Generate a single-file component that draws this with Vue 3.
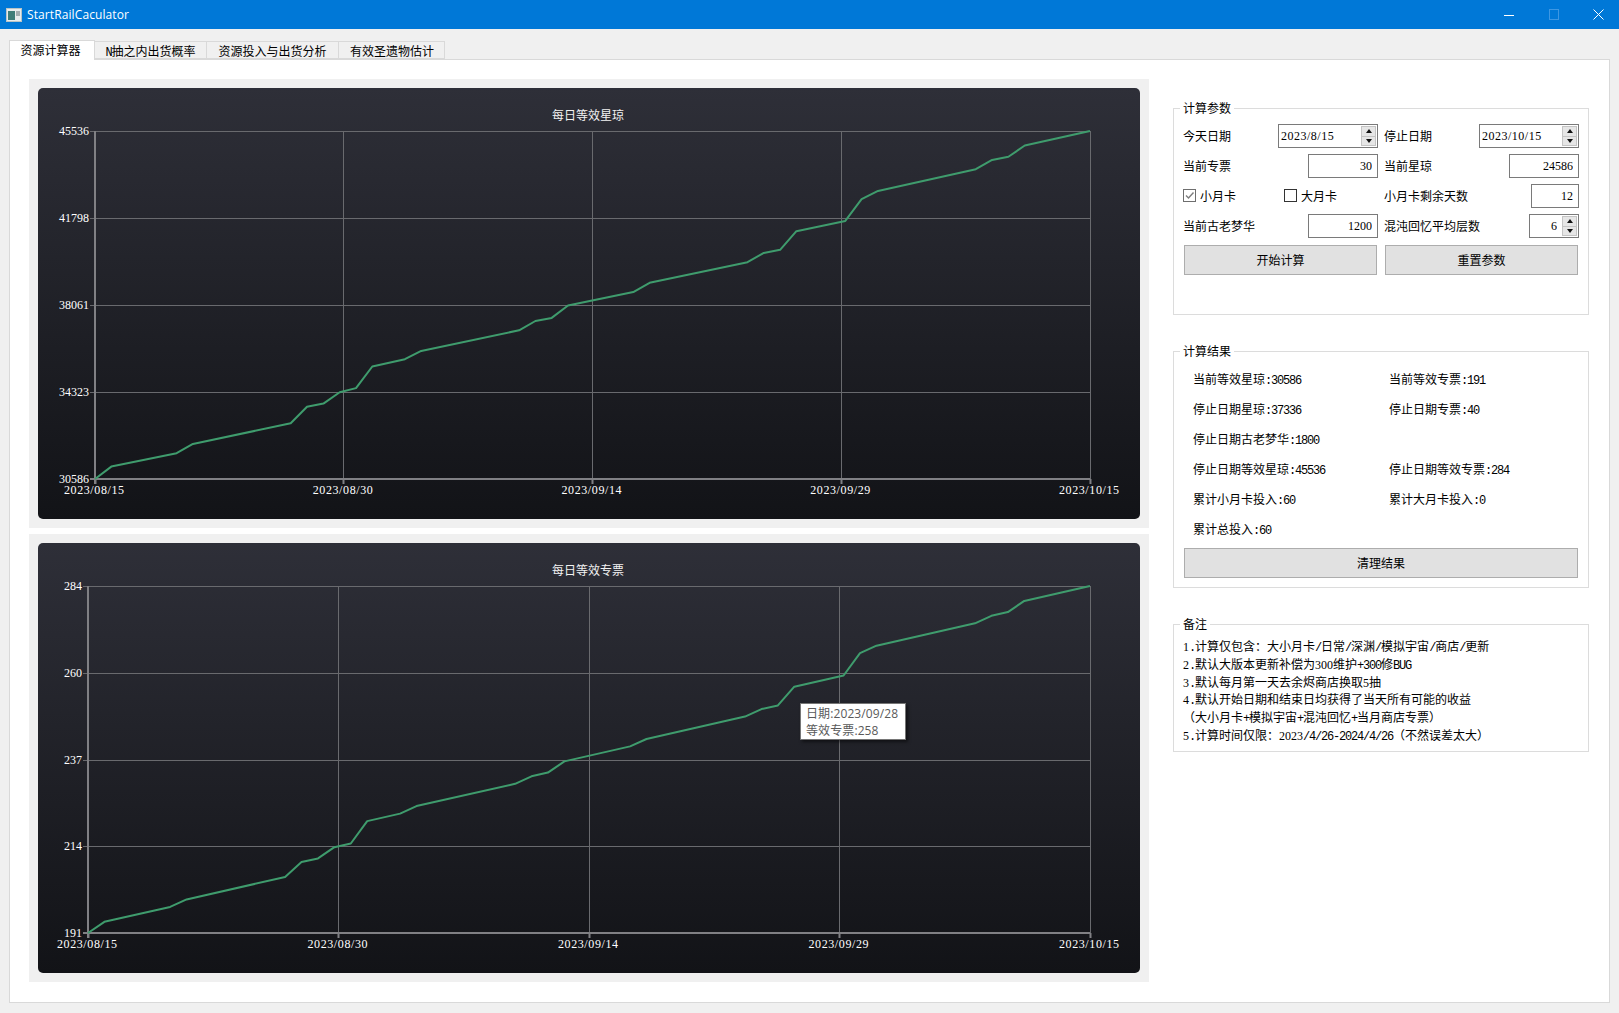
<template>
  <div class="window">
    <div class="titlebar">
      <svg class="app-icon" width="16" height="14" viewBox="0 0 16 14">
        <rect x="0.5" y="0.5" width="15" height="13" fill="#e8ecec" stroke="#b9c4c6" />
        <rect x="2" y="3" width="7" height="9" fill="#3f7d78" />
        <rect x="10" y="3" width="4" height="5" fill="#a3adaf" />
      </svg>
      <span class="app-title">StartRailCaculator</span>
      <div class="win-controls">
        <span class="win-btn"><svg width="10" height="10"><path d="M0 5.5h10" stroke="#fff" /></svg></span>
        <span class="win-btn"><svg width="10" height="11"><rect x="0.5" y="0.5" width="9" height="10" fill="none" stroke="#3d97e3" /></svg></span>
        <span class="win-btn"><svg width="11" height="11"><path d="M0.5 0.5l10 10M10.5 0.5l-10 10" stroke="#fff" /></svg></span>
      </div>
    </div>

    <div class="tabs">
      <div v-for="(tab, i) in tabs" :key="tab" class="tab" :class="{ active: i === 0 }"><Mixed :text="tab" /></div>
    </div>

    <div class="pane">
      <div class="charts">
        <div v-for="chart in charts" :key="chart.title" class="chart-frame">
          <div class="chart-card">
            <svg width="1102" height="431" class="plot">
              <text x="550" y="32" text-anchor="middle" class="chart-title">{{ chart.title }}</text>
              <line v-for="x in chart.gridX" :key="'x' + x" :x1="x" :x2="x" :y1="chart.top" :y2="chart.bottom" class="grid" />
              <line v-for="t in chart.ticksY" :key="'y' + t.y" :x1="chart.left - 5" :x2="chart.right" :y1="t.y" :y2="t.y" class="grid" />
              <line v-for="x in chart.gridX" :key="'t' + x" :x1="x" :x2="x" :y1="chart.bottom" :y2="chart.bottom + 5" class="axis-tick" />
              <line :x1="chart.left" :x2="chart.left" :y1="chart.top" :y2="chart.bottom + 5" class="axis" />
              <line :x1="chart.left - 5" :x2="chart.right" :y1="chart.bottom" :y2="chart.bottom" class="axis" />
              <polyline :points="chart.points" class="series" />
              <text v-for="t in chart.ticksY" :key="'l' + t.y" :x="chart.left - 6" :y="t.y + 3.5" text-anchor="end" class="tick-label">{{ t.label }}</text>
              <text
                v-for="t in chart.ticksX"
                :key="t.label"
                :x="t.x - 31"
                :y="chart.bottom + 15"
                textLength="60"
                class="tick-label"
              >{{ t.label }}</text>
            </svg>
            <div v-if="chart.tip" class="tooltip">
              <div v-for="line in chart.tip" :key="line">{{ line }}</div>
            </div>
          </div>
        </div>
      </div>

      <div class="side">
        <section class="group params">
          <span class="legend">计算参数</span>
          <div class="form-grid">
            <div class="field">
              <label>今天日期</label>
              <div class="spin-input date"><input value="2023/8/15" readonly /><span class="spin"><i class="up"></i><i class="down"></i></span></div>
            </div>
            <div class="field">
              <label>停止日期</label>
              <div class="spin-input date"><input value="2023/10/15" readonly /><span class="spin"><i class="up"></i><i class="down"></i></span></div>
            </div>
            <div class="field">
              <label>当前专票</label>
              <input class="num" value="30" readonly />
            </div>
            <div class="field">
              <label>当前星琼</label>
              <input class="num" value="24586" readonly />
            </div>
            <div class="field checks">
              <label class="check"><span class="box checked"><svg width="11" height="11"><path d="M2 5.5l2.5 2.5L9.5 2.5" fill="none" stroke="#7d7d7d" stroke-width="1.4" /></svg></span>小月卡</label>
              <label class="check"><span class="box"></span>大月卡</label>
            </div>
            <div class="field">
              <label>小月卡剩余天数</label>
              <input class="num short" value="12" readonly />
            </div>
            <div class="field">
              <label>当前古老梦华</label>
              <input class="num" value="1200" readonly />
            </div>
            <div class="field">
              <label>混沌回忆平均层数</label>
              <div class="spin-input layers"><input value="6" readonly /><span class="spin"><i class="up"></i><i class="down"></i></span></div>
            </div>
          </div>
          <div class="btn-row">
            <button>开始计算</button>
            <button>重置参数</button>
          </div>
        </section>

        <section class="group results">
          <span class="legend">计算结果</span>
          <div class="result-grid">
            <div v-for="(item, i) in results" :key="i"><Mixed :text="item" /></div>
          </div>
          <button class="clear">清理结果</button>
        </section>

        <section class="group notes">
          <span class="legend">备注</span>
          <div v-for="line in notes" :key="line"><Mixed :text="line" /></div>
        </section>
      </div>
    </div>
  </div>
</template>

<script setup>
import { h } from 'vue'

// half-width runs keep a 6px cell, like the half-width glyphs of the original font
const Mixed = props =>
  (props.text.match(/\d+|[\x00-\x7f]+|[^\x00-\x7f]+/g) || []).map(run => {
    if (/^\d/.test(run)) return h('span', { class: 'digits' }, run)
    if (/^[\x00-\x7f]/.test(run)) return h('span', { class: 'latin' }, run)
    return run
  })
Mixed.props = ['text']

const tabs = ['资源计算器', 'N抽之内出货概率', '资源投入与出货分析', '有效圣遗物估计']

const results = [
  '当前等效星琼:30586', '当前等效专票:191',
  '停止日期星琼:37336', '停止日期专票:40',
  '停止日期古老梦华:1800', '',
  '停止日期等效星琼:45536', '停止日期等效专票:284',
  '累计小月卡投入:60', '累计大月卡投入:0',
  '累计总投入:60', ''
]

const notes = [
  '1.计算仅包含：大小月卡/日常/深渊/模拟宇宙/商店/更新',
  '2.默认大版本更新补偿为300维护+300修BUG',
  '3.默认每月第一天去余烬商店换取5抽',
  '4.默认开始日期和结束日均获得了当天所有可能的收益',
  '（大小月卡+模拟宇宙+混沌回忆+当月商店专票）',
  '5.计算时间仅限：2023/4/26-2024/4/26（不然误差太大）'
]

// [day index, stellar jade]
const jade = [
  [0, 30586], [1, 31118], [5, 31695], [6, 32094], [12, 32981], [13, 33691], [14, 33824],
  [15, 34312], [16, 34490], [17, 35421], [19, 35732], [20, 36087], [26, 36974], [27, 37373],
  [28, 37506], [29, 38038], [33, 38615], [34, 39014], [40, 39901], [41, 40300], [42, 40433],
  [43, 41232], [46, 41676], [47, 42608], [48, 42963], [54, 43894], [55, 44293], [56, 44426],
  [57, 44914], [61, 45536]
]
const DAYS = 61

function fmtDate(offset) {
  const d = new Date(2023, 7, 15 + offset)
  const m = String(d.getMonth() + 1).padStart(2, '0')
  const day = String(d.getDate()).padStart(2, '0')
  return `${d.getFullYear()}/${m}/${day}`
}

function buildChart({ title, series, left, top, bottom, tip }) {
  const right = 1052
  const min = series[0][1]
  const max = series[series.length - 1][1]
  const w = right - left
  const h = bottom - top
  const gridX = [0, 1, 2, 3, 4].map(k => Math.floor(left + (w * k) / 4) + 0.5)
  const ticksY = [0, 1, 2, 3, 4].map(k => ({
    y: Math.round(top + (h * k) / 4) + 0.5,
    label: Math.floor(max - ((max - min) * k) / 4)
  }))
  const ticksX = [0, 1, 2, 3, 4].map(k => ({
    x: left + (w * k) / 4,
    label: fmtDate(Math.floor((DAYS * k) / 4))
  }))
  const points = series
    .map(([day, v]) => `${(left + (w * day) / DAYS).toFixed(1)},${(bottom - (h * (v - min)) / (max - min)).toFixed(1)}`)
    .join(' ')
  return { title, left, right, top, bottom, gridX, ticksY, ticksX, points, tip }
}

const charts = [
  buildChart({ title: '每日等效星琼', series: jade, left: 57, top: 43, bottom: 391 }),
  buildChart({
    title: '每日等效专票',
    series: jade.map(([d, v]) => [d, Math.floor(v / 160)]),
    left: 50,
    top: 43,
    bottom: 390,
    tip: ['日期:2023/09/28', '等效专票:258']
  })
]
</script>

<style>
html, body {
  margin: 0;
  background: #f0f0f0;
  overflow: hidden;
}
.digits {
  font-family: "Liberation Serif", serif;
  line-height: 0;
}
.latin {
  font-family: "Liberation Mono", monospace;
  letter-spacing: -1.2px;
  line-height: 0;
}
</style>

<style scoped>
.window {
  width: 1619px;
  height: 1013px;
  background: #f0f0f0;
  color: #000;
  font: 12px "Noto Sans CJK SC", sans-serif;
  display: flex;
  flex-direction: column;
}

.titlebar {
  height: 29px;
  flex: none;
  background: #0078d7;
  color: #fff;
  display: flex;
  align-items: center;
  padding-left: 6px;
  overflow: hidden;
}
.app-icon {
  margin-right: 5px;
}
.app-title {
  font: 12px "Open Sans", "Noto Sans", sans-serif;
  letter-spacing: 0.1px;
}
.win-controls {
  margin-left: auto;
  margin-right: -2px;
  display: flex;
}
.win-btn {
  width: 45px;
  height: 29px;
  display: flex;
  align-items: center;
  justify-content: center;
}

.tabs {
  display: flex;
  align-items: flex-end;
  height: 19px;
  margin: 11px 9px 0;
  position: relative;
  z-index: 1;
}
.tab {
  height: 18px;
  box-sizing: border-box;
  line-height: 18px;
  text-align: center;
  border: 1px solid #d9d9d9;
  border-left-width: 0;
  background: #f0f0f0;
}
.tab:nth-child(1) {
  width: 86px;
}
.tab:nth-child(2) {
  width: 112px;
}
.tab:nth-child(3) {
  width: 132px;
}
.tab:nth-child(4) {
  width: 106px;
  padding-left: 1px;
}
.tab.active {
  height: 20px;
  margin-bottom: -1px;
  border-left-width: 1px;
  border-bottom: 0;
  padding-right: 3px;
  background: #fff;
}

.pane {
  flex: 1;
  margin: 0 9px 10px;
  box-sizing: border-box;
  border: 1px solid #d9d9d9;
  background: #fff;
  padding: 19px 21px 19px 19px;
  display: flex;
  gap: 24px;
  min-height: 0;
}

.charts {
  width: 1120px;
  flex: none;
  display: grid;
  grid-template-rows: 449px 448px;
  gap: 6px;
}
.chart-frame {
  background: #f0f0f0;
  padding: 9px;
  min-height: 0;
}
.chart-card {
  position: relative;
  height: 100%;
  border-radius: 5px;
  overflow: hidden;
  background: linear-gradient(#2e2f38, #121317);
}
.plot {
  display: block;
}
.chart-title {
  font: 12px "Noto Sans CJK SC", sans-serif;
  fill: #f2f2f2;
}
.grid {
  stroke: #696a6e;
  stroke-width: 1;
}
.axis {
  stroke: #808084;
  stroke-width: 2;
}
.axis-tick {
  stroke: #808084;
  stroke-width: 2;
}
.series {
  fill: none;
  stroke: #3f9c6d;
  stroke-width: 2;
  stroke-linejoin: round;
}
.tick-label {
  font: 12px "Liberation Serif", serif;
  fill: #fff;
}
.tooltip {
  position: absolute;
  left: 762px;
  top: 160px;
  width: 106px;
  height: 37px;
  box-sizing: border-box;
  padding: 1px 5px 0;
  background: #fff;
  border: 1px solid #767676;
  box-shadow: 2px 2px 3px rgba(0, 0, 0, 0.5);
  color: #5a5a5a;
  font: 12px/17px "Open Sans", "Noto Sans CJK SC", sans-serif;
  letter-spacing: 0.1px;
  white-space: nowrap;
}

.side {
  flex: 1;
  padding-top: 29px;
  display: flex;
  flex-direction: column;
  gap: 36px;
}
.group {
  position: relative;
  box-sizing: border-box;
  border: 1px solid #dcdcdc;
}
.legend {
  position: absolute;
  top: -9px;
  left: 6px;
  padding: 0 3px;
  background: #fff;
  line-height: 16px;
}

.params {
  height: 207px;
  padding: 15px 9px 0 9px;
}
.form-grid {
  display: grid;
  grid-template-columns: 195px 195px;
  column-gap: 6px;
  row-gap: 6px;
}
.field {
  height: 24px;
  display: flex;
  align-items: center;
  justify-content: space-between;
  white-space: nowrap;
}
.field > label:not(.check) {
  margin-top: -2px;
}
.check {
  margin-top: -1px;
}
input {
  box-sizing: border-box;
  height: 24px;
  border: 1px solid #7a7a7a;
  outline: none;
  font: 12px "Liberation Serif", serif;
  background: #fff;
  color: #000;
  margin: 0;
}
.num {
  width: 70px;
  text-align: right;
  padding: 0 5px 0 2px;
}
.num.short {
  width: 48px;
}
.spin-input {
  position: relative;
  height: 24px;
}
.spin-input input {
  width: 100%;
  padding: 0 2px;
}
.spin-input.date {
  width: 100px;
}
.spin-input.date input {
  letter-spacing: 0.5px;
}
.spin-input.layers {
  width: 50px;
}
.spin-input.layers input {
  text-align: right;
  padding-right: 21px;
}
.spin {
  position: absolute;
  top: 2px;
  right: 2px;
  width: 15px;
  height: 20px;
  display: flex;
  flex-direction: column;
}
.spin i {
  flex: 1;
  display: flex;
  align-items: center;
  justify-content: center;
  background: #e6e6e6;
  border: 1px solid #c4c4c4;
}
.spin i + i {
  border-top: 0;
}
.spin i::after {
  content: '';
  border-left: 3.5px solid transparent;
  border-right: 3.5px solid transparent;
}
.spin .up::after {
  border-bottom: 4px solid #111;
}
.spin .down::after {
  border-top: 4px solid #111;
}
.checks {
  justify-content: flex-start;
}
.check {
  flex: none;
  width: 101px;
  display: flex;
  align-items: center;
  gap: 4px;
}
.box {
  width: 13px;
  height: 13px;
  box-sizing: border-box;
  border: 1px solid #333;
  background: #fff;
  display: flex;
}
.box.checked {
  border-color: #6e6e6e;
}

button {
  box-sizing: border-box;
  height: 30px;
  border: 1px solid #adadad;
  background: #e1e1e1;
  font: inherit;
  color: #000;
  padding: 0 0 2px;
}
.btn-row {
  display: flex;
  gap: 8px;
  margin: 7px 0 0 1px;
}
.btn-row button {
  width: 193px;
}

.results {
  height: 237px;
  padding: 13px 9px 0 10px;
}
.result-grid {
  display: grid;
  grid-template-columns: 196px 1fr;
  grid-auto-rows: 30px;
  padding-left: 9px;
  line-height: 28px;
}
.clear {
  width: 394px;
  display: block;
  margin-top: 3px;
}

.notes {
  height: 128px;
  padding: 12px 0 0 9px;
  line-height: 17.8px;
  white-space: nowrap;
}
</style>
